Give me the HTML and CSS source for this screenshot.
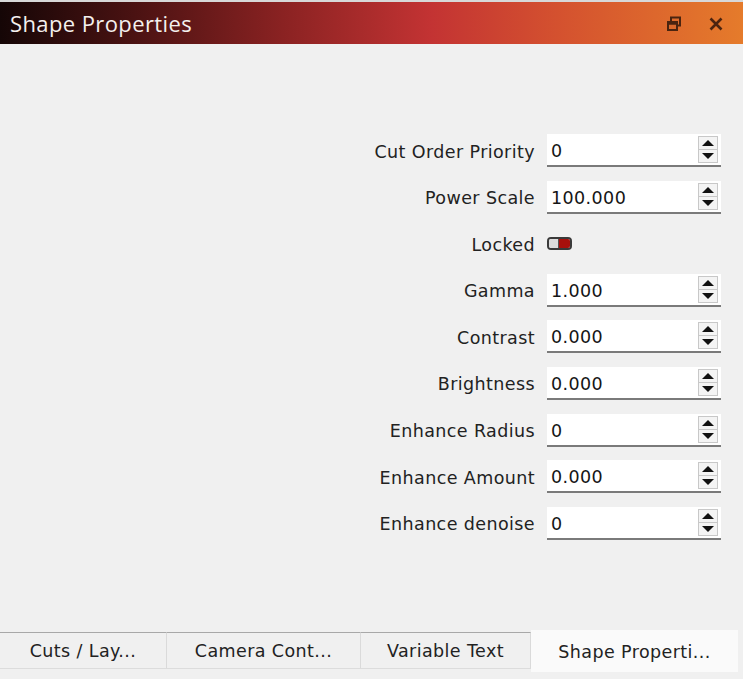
FILE: index.html
```html
<!DOCTYPE html>
<html>
<head>
<meta charset="utf-8">
<link rel="stylesheet" href="styles.css">
</head>
<body>
<div class="panel">
  <div class="topline"></div>
  <div class="titlebar">
    <span class="title">Shape Properties</span>
    <div class="title-icons">
      <svg class="ico" width="16" height="16" viewBox="0 0 16 16">
        <rect x="5" y="1.5" width="9" height="8" fill="none" stroke="#4a2410" stroke-width="2"/>
        <rect x="2" y="6" width="9" height="8" fill="#d9692c" stroke="#4a2410" stroke-width="2"/>
        <line x1="2" y1="7.5" x2="11" y2="7.5" stroke="#4a2410" stroke-width="2.5"/>
      </svg>
      <svg class="ico close" width="16" height="16" viewBox="0 0 16 16">
        <path d="M2.5 2.5 L13.5 13.5 M13.5 2.5 L2.5 13.5" stroke="#4a2410" stroke-width="2.6" fill="none"/>
      </svg>
    </div>
  </div>
  <div class="content">
    <div class="form">
      <label>Cut Order Priority</label>
      <div class="spin"><span class="val">0</span><span class="btns"><span class="up"></span><span class="dn"></span></span></div>
      <label>Power Scale</label>
      <div class="spin"><span class="val">100.000</span><span class="btns"><span class="up"></span><span class="dn"></span></span></div>
      <label>Locked</label>
      <div class="togglecell"><span class="toggle"><span class="knob"></span><span class="on"></span></span></div>
      <label>Gamma</label>
      <div class="spin"><span class="val">1.000</span><span class="btns"><span class="up"></span><span class="dn"></span></span></div>
      <label>Contrast</label>
      <div class="spin"><span class="val">0.000</span><span class="btns"><span class="up"></span><span class="dn"></span></span></div>
      <label>Brightness</label>
      <div class="spin"><span class="val">0.000</span><span class="btns"><span class="up"></span><span class="dn"></span></span></div>
      <label>Enhance Radius</label>
      <div class="spin"><span class="val">0</span><span class="btns"><span class="up"></span><span class="dn"></span></span></div>
      <label>Enhance Amount</label>
      <div class="spin"><span class="val">0.000</span><span class="btns"><span class="up"></span><span class="dn"></span></span></div>
      <label>Enhance denoise</label>
      <div class="spin"><span class="val">0</span><span class="btns"><span class="up"></span><span class="dn"></span></span></div>
    </div>
  </div>
  <div class="tabbar">
    <div class="tab t1">Cuts / Lay...</div>
    <div class="tab t2">Camera Cont...</div>
    <div class="tab t3">Variable Text</div>
    <div class="tab t4 active">Shape Properti...</div>
  </div>
</div>
</body>
</html>
```

FILE: styles.css
```css
html, body {
  margin: 0;
  padding: 0;
  background: #f0f0f0;
}
body {
  font-family: "DejaVu Sans", "Open Sans", sans-serif;
  color: #1a1a1a;
  width: 743px;
  height: 679px;
  overflow: hidden;
}
.panel {
  display: flex;
  flex-direction: column;
  height: 679px;
}
.topline {
  height: 2px;
  background: #d8d8d8;
}
.titlebar {
  height: 42px;
  display: flex;
  align-items: center;
  justify-content: space-between;
  padding: 0 19px 0 10px;
  background: linear-gradient(90deg, #150606 0%, #4a1212 18%, #8a2222 38%, #c33333 58%, #d4512f 75%, #e57b2b 100%);
}
.title {
  font-family: "Open Sans", sans-serif;
  color: #f4f0ee;
  font-size: 22px;
  letter-spacing: 0.4px;
}
.title-icons {
  display: flex;
  gap: 26px;
  align-items: center;
  padding-top: 2px;
}
.content {
  flex: 1;
  display: flex;
  justify-content: flex-end;
  padding: 90px 22px 0 0;
}
.form {
  display: grid;
  grid-template-columns: auto 174px;
  grid-auto-rows: 33px;
  row-gap: 13.6px;
  column-gap: 12px;
  align-items: center;
}
.form label {
  text-align: right;
  font-size: 17.5px;
  letter-spacing: 0.4px;
  color: #222;
  padding-top: 2px;
}
.spin {
  height: 33px;
  box-sizing: border-box;
  background: #fff;
  border-bottom: 2px solid #7a7a7a;
  display: flex;
  align-items: center;
  justify-content: space-between;
  padding: 0 3px 0 4px;
}
.val {
  font-size: 17.5px;
  letter-spacing: 0.4px;
  color: #151515;
  padding-top: 3px;
}
.btns {
  width: 20px;
  height: 27px;
  box-sizing: border-box;
  border: 1px solid #c8c8c8;
  background: #f4f4f4;
  display: flex;
  flex-direction: column;
}
.btns span {
  flex: 1;
  display: flex;
  align-items: center;
  justify-content: center;
}
.btns .up {
  border-bottom: 1px solid #c8c8c8;
}
.btns .up::before {
  content: "";
  border-left: 6px solid transparent;
  border-right: 6px solid transparent;
  border-bottom: 6px solid #111;
}
.btns .dn::before {
  content: "";
  border-left: 6px solid transparent;
  border-right: 6px solid transparent;
  border-top: 6px solid #111;
}
.togglecell {
  height: 33px;
  display: flex;
  align-items: center;
}
.toggle {
  width: 25px;
  height: 13px;
  box-sizing: border-box;
  border: 2px solid #3a3a3a;
  border-radius: 4px;
  display: flex;
  overflow: hidden;
}
.knob {
  width: 9px;
  background: #dcdcdc;
  border-right: 1px solid #555;
}
.on {
  flex: 1;
  background: #a8100c;
}
.tabbar {
  height: 47px;
  display: flex;
  align-items: flex-start;
}
.tab {
  box-sizing: border-box;
  height: 37px;
  margin-top: 0;
  border-top: 1px solid #a8a8a8;
  border-right: 1px solid #dadada;
  border-bottom: 1px solid #dcdcdc;
  background: #f0f0f0;
  display: flex;
  align-items: center;
  justify-content: center;
  font-size: 17.5px;
  letter-spacing: 0.4px;
  color: #222;
}
.t1 { width: 167px; }
.t2 { width: 194px; }
.t3 { width: 170px; }
.t4 {
  width: 207px;
  height: 42px;
  margin-top: -2px;
  background: #fafafa;
  border: none;
  padding-top: 2px;
}
```
